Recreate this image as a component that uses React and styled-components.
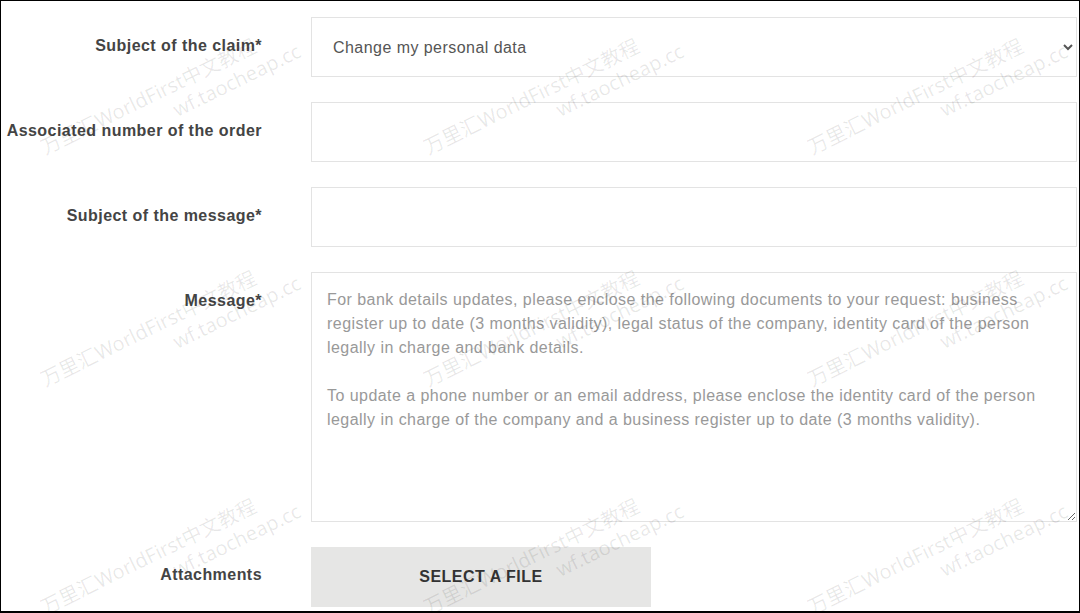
import React from 'react';
import styled, { createGlobalStyle } from 'styled-components';

const GlobalStyle = createGlobalStyle`
	html, body {
		margin: 0;
		padding: 0;
		background: #fff;
	}
	body {
		font-family: 'Liberation Sans', Arial, sans-serif;
	}
`;

const Frame = styled.div`
	position: relative;
	box-sizing: border-box;
	width: 1080px;
	height: 613px;
	border: 1px solid #000;
	border-bottom-width: 2px;
	overflow: hidden;
	background: #fff;
`;

const Form = styled.form`
	display: grid;
	grid-template-columns: 261px 766px;
	column-gap: 49px;
	row-gap: 25px;
	padding-top: 16px;
`;

const Label = styled.label`
	display: block;
	text-align: right;
	padding-top: ${(p) => p.$top || 19}px;
	font-size: 16px;
	line-height: 20px;
	font-weight: 700;
	letter-spacing: 0.45px;
	color: #444;
	white-space: nowrap;
`;

const Select = styled.select`
	box-sizing: border-box;
	width: 100%;
	height: 60px;
	padding: 0 14px 0 17px;
	border: 1px solid #e3e3e3;
	border-radius: 0;
	background: #fff;
	font-family: 'Liberation Sans', Arial, sans-serif;
	font-size: 16px;
	letter-spacing: 0.45px;
	color: #555;
	outline: none;
`;

const Input = styled.input`
	box-sizing: border-box;
	width: 100%;
	height: 60px;
	padding: 0 20px;
	border: 1px solid #e3e3e3;
	font-family: 'Liberation Sans', Arial, sans-serif;
	font-size: 16px;
	color: #555;
	outline: none;
`;

const TextArea = styled.textarea`
	box-sizing: border-box;
	width: 100%;
	height: 250px;
	padding: 15px 15px;
	border: 1px solid #e3e3e3;
	font-family: 'Liberation Sans', Arial, sans-serif;
	font-size: 16px;
	line-height: 24px;
	letter-spacing: 0.45px;
	color: #555;
	outline: none;
	resize: both;

	&::placeholder {
		color: #999;
	}
`;

const FileButton = styled.button`
	display: block;
	width: 340px;
	height: 60px;
	border: none;
	background: #e6e6e5;
	font-family: 'Liberation Sans', Arial, sans-serif;
	font-size: 16px;
	font-weight: 700;
	letter-spacing: 0.5px;
	color: #333;
	cursor: pointer;
`;

const Watermarks = styled.div`
	position: absolute;
	inset: 0;
	pointer-events: none;
`;

const Mark = styled.div`
	position: absolute;
	left: ${(p) => p.$x}px;
	top: ${(p) => p.$y}px;
	transform: rotate(-26deg);
	transform-origin: left bottom;
	font-family: 'Noto Sans', 'Noto Sans CJK SC', sans-serif;
	font-size: 20px;
	line-height: 24px;
	color: rgba(0, 0, 0, 0.09);
	white-space: nowrap;

	span {
		display: block;
		padding-left: 135px;
	}
`;

const messageHint =
	'For bank details updates, please enclose the following documents to your request: business\nregister up to date (3 months validity), legal status of the company, identity card of the person\nlegally in charge and bank details.\n\nTo update a phone number or an email address, please enclose the identity card of the person\nlegally in charge of the company and a business register up to date (3 months validity).';

const markSpots = [];
[132, 364, 592].forEach((y) => {
	[57, 440, 824].forEach((x) => markSpots.push({ x, y }));
});

export default function App() {
	return (
		<>
			<GlobalStyle />
			<Frame>
				<Form onSubmit={(e) => e.preventDefault()}>
					<Label htmlFor="claim">Subject of the claim*</Label>
					<Select id="claim" defaultValue="personal">
						<option value="personal">Change my personal data</option>
						<option value="order">Question about an order</option>
					</Select>

					<Label htmlFor="order">Associated number of the order</Label>
					<Input id="order" type="text" />

					<Label htmlFor="subject">Subject of the message*</Label>
					<Input id="subject" type="text" />

					<Label htmlFor="message">Message*</Label>
					<TextArea id="message" placeholder={messageHint} />

					<Label $top={18}>Attachments</Label>
					<div>
						<FileButton type="button">SELECT A FILE</FileButton>
					</div>
				</Form>

				<Watermarks>
					{markSpots.map((m, i) => (
						<Mark key={i} $x={m.x} $y={m.y}>
							万里汇WorldFirst中文教程
							<span>wf.taocheap.cc</span>
						</Mark>
					))}
				</Watermarks>
			</Frame>
		</>
	);
}
